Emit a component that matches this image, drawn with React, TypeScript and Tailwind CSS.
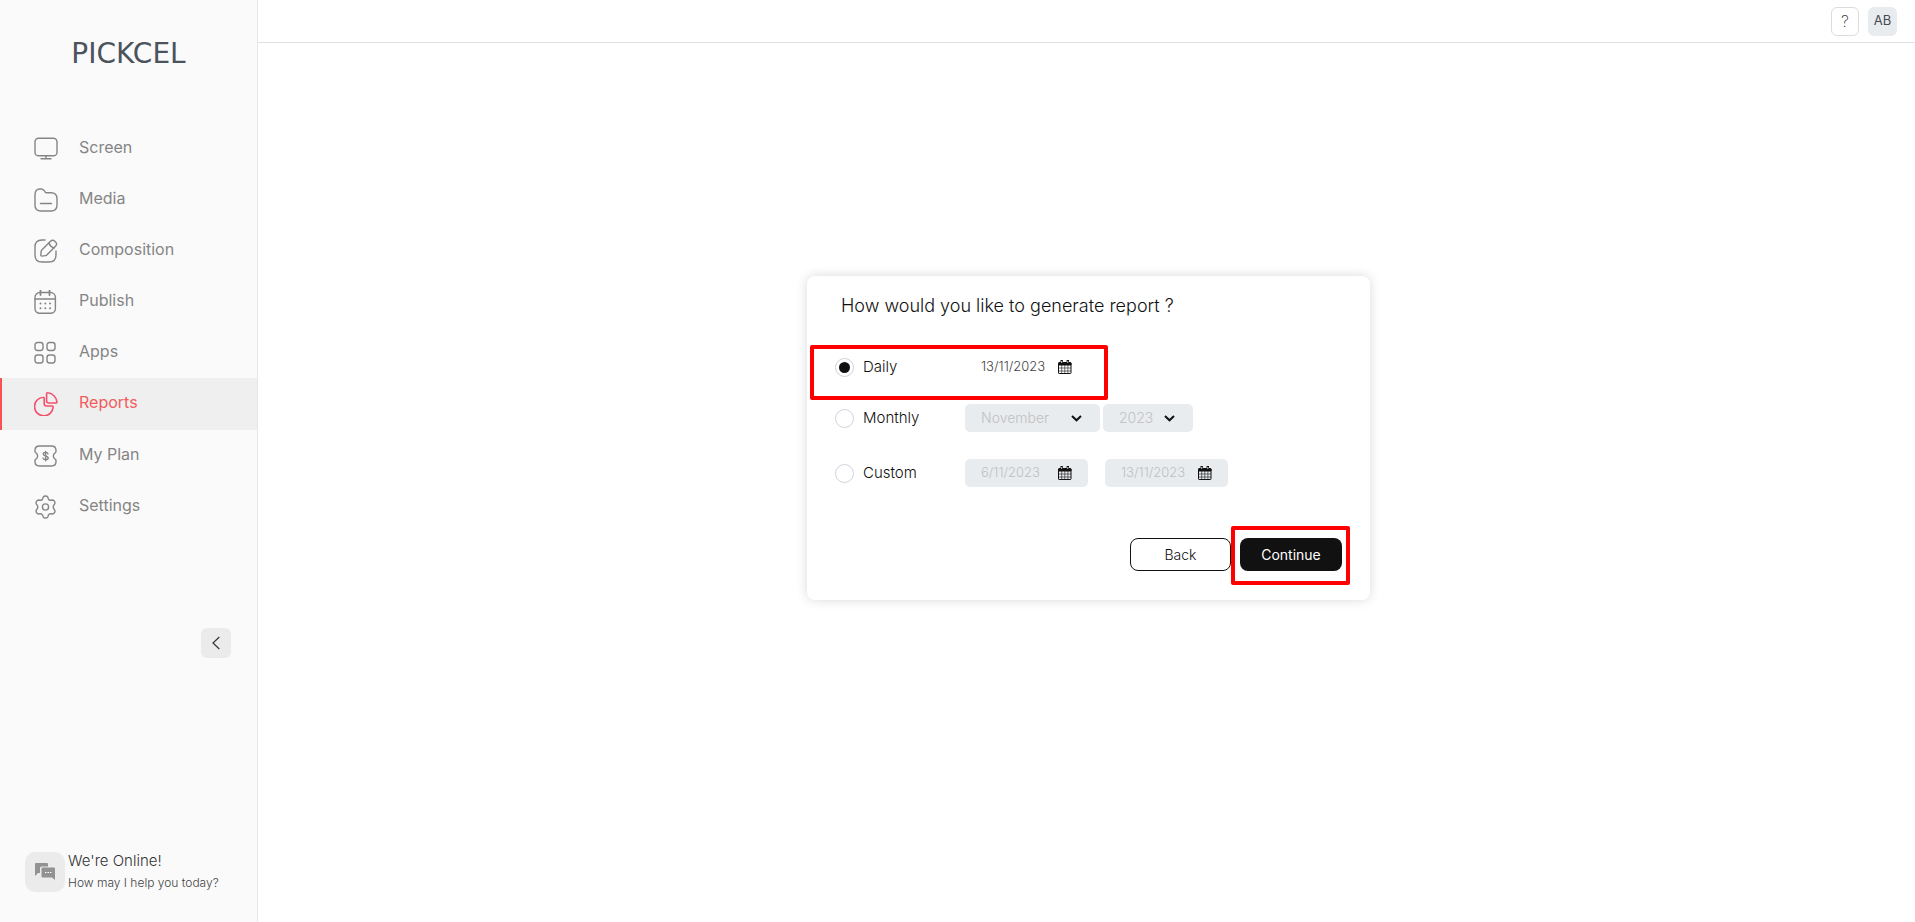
import React, { useState } from 'react'
import clsx from 'clsx'

type Mode = 'daily' | 'monthly' | 'custom'

const iconProps = {
  width: 24,
  height: 24,
  viewBox: '0 0 24 24',
  fill: 'none',
  stroke: 'currentColor',
  strokeWidth: 1.4,
  strokeLinecap: 'round' as const,
  strokeLinejoin: 'round' as const,
  'aria-hidden': true,
}

const ScreenIcon = () => (
  <svg {...iconProps}>
    <rect x="1" y="1.2" width="22" height="17.6" rx="3.6" />
    <path d="M12 18.8v2.8M7 21.8h10" />
  </svg>
)

const MediaIcon = () => (
  <svg {...iconProps}>
    <path d="M1 7C1 3 2.500 1 5.800 1h1c1.700 0 2.600.5 3.400 1.700l.8 1.200c.5.7.9.9 1.700.9H17c4 0 6 2 6 6V17c0 4-2 6-6 6H7c-4 0-6-2-6-6z" />
    <path d="M6.500 15.500h11" />
  </svg>
)

const CompositionIcon = () => (
  <svg {...iconProps}>
    <path d="M11 1H8C3 1 1 3 1 8v8c0 5 2 7 7 7h7c5 0 7-2 7-7v-4" />
    <path d="M16.500 2.300 7.800 11a2 2 0 0 0-.6 1.200L6.800 16c-.1.700.4 1.200 1.100 1.100l3.700-.5a2 2 0 0 0 1.200-.6l8.700-8.700c1.500-1.500 1.500-2.900 0-4.300l-.7-.7c-1.400-1.500-2.800-1.500-4.300 0z" />
    <path d="M15 4c.8 2.600 2.500 4.200 5 5" />
  </svg>
)

const PublishIcon = () => (
  <svg {...iconProps}>
    <path d="M6.500 .5v4.500M15.500 .5v4.500" strokeWidth="1.800" />
    <rect x="1" y="2.500" width="20.400" height="20.800" rx="4.800" />
    <path d="M1 9h20.400" />
    <path d="M6.500 13.600h.01M11.300 13.600h.01M16 13.600h.01M6.500 18.200h.01M11.300 18.200h.01M16 18.200h.01" strokeWidth="2" />
  </svg>
)

const AppsIcon = () => (
  <svg {...iconProps}>
    <rect x="1" y="1.500" width="8" height="8" rx="2.400" />
    <rect x="13" y="1.500" width="8" height="8" rx="2.400" />
    <rect x="1" y="14" width="8" height="8" rx="2.400" />
    <rect x="13" y="14" width="8" height="8" rx="2.400" />
  </svg>
)

const ReportsIcon = () => (
  <svg {...iconProps} strokeWidth={1.6}>
    <path d="M12.600 1.800c0-.7.400-1.100 1.100-1 4.900.5 8.700 4.300 9.200 9 .1.700-.4 1.200-1.100 1.200h-7.200c-1.300 0-2-.7-2-2z" />
    <path d="M9.200 5.300c.6-.1 1 .3 1 .9v5.600c0 1.500.7 2.200 2.200 2.200h5.700c.7 0 1.100.5 1 1.100A9.300 9.300 0 1 1 9.200 5.300z" />
  </svg>
)

const PlanIcon = () => (
  <svg {...iconProps}>
    <path d="M5.500 2h12c3.200 0 4.500 1.300 4.500 4.500v1c0 .6-.3 1-.9 1.300-2.300 1.300-2.300 5.100 0 6.400.6.300.9.700.9 1.300v1c0 3.200-1.300 4.500-4.500 4.500h-12C2.300 22 1 20.700 1 17.500v-1c0-.6.3-1 .9-1.300 2.300-1.300 2.300-5.100 0-6.400C1.300 8.500 1 8.100 1 7.500v-1C1 3.300 2.300 2 5.500 2z" />
    <path d="M14 9.900c-.2-1-1-1.500-2.400-1.500-1.500 0-2.400.6-2.400 1.700 0 2.500 5 1.300 5 3.900 0 1.100-1 1.700-2.500 1.700s-2.500-.6-2.700-1.600M11.600 7.400v9.400" />
  </svg>
)

const SettingsIcon = () => (
  <svg {...iconProps}>
    <circle cx="11.500" cy="12" r="3.100" />
    <path d="M9.300 1.900c.8-1.200 3.600-1.200 4.400 0l.8 2.200c.4.800 1.200 1.200 2.100 1.100l2.100-.2c1.400 0 2.700 2.300 2.100 3.600l-1.100 1.800c-.5.800-.5 2.400 0 3.200l1.100 1.800c.6 1.300-.8 3.500-2.200 3.600l-2-.2c-.9-.1-1.700.4-2.100 1.200l-.8 2.100c-.8 1.200-3.600 1.200-4.400 0L8.500 20c-.4-.8-1.200-1.300-2.100-1.200l-2 .2c-1.400 0-2.800-2.300-2.200-3.600l1.100-1.800c.5-.8.500-2.400 0-3.200L2.200 8.600C1.600 7.300 3 5 4.400 5l2 .2c.9.100 1.700-.3 2.100-1.100z" />
  </svg>
)

const ChatIcon = () => (
  <svg width="20" height="18" viewBox="0 0 20 18" aria-hidden="true">
    <path fill="#929292" d="M1 0h11a1 1 0 0 1 1 1v2.500H6.500A1.500 1.500 0 0 0 5 5v5H3l-3 3V1a1 1 0 0 1 1-1z" />
    <path fill="#929292" d="M7.500 4.500H19a1 1 0 0 1 1 1V17l-3-2.500H7.500a1 1 0 0 1-1-1v-8a1 1 0 0 1 1-1z" />
    <path stroke="#fff" strokeWidth="1" strokeDasharray="1.500 1" d="M10 9.500h7" />
  </svg>
)

const CalendarIcon = () => (
  <svg width="14" height="14" viewBox="0 0 14 14" fill="none" stroke="#111" aria-hidden="true">
    <rect x=".5" y="2.500" width="12.500" height="11" rx=".6" />
    <path d="M1 3h12v2H1z" fill="#111" />
    <path d="M.5 8h12.500M.5 11h12.500M3.700 5v8.500M6.800 5v8.500M9.900 5v8.500" strokeWidth=".6" />
    <path d="M3.700.5v3M9.800.5v3" strokeWidth="2.400" strokeLinecap="round" />
    <path d="M3.700 1v2M9.800 1v2" stroke="#fff" strokeWidth=".8" />
  </svg>
)

const ChevronIcon = () => (
  <svg
    className="pointer-events-none absolute right-[18px] top-[11px]"
    width="11"
    height="7"
    viewBox="0 0 11 7"
    fill="none"
    stroke="#111"
    strokeWidth="2"
    aria-hidden="true"
  >
    <path d="M1 1l4.500 4.300L10 1" />
  </svg>
)

const navItems = [
  { label: 'Screen', Icon: ScreenIcon },
  { label: 'Media', Icon: MediaIcon },
  { label: 'Composition', Icon: CompositionIcon },
  { label: 'Publish', Icon: PublishIcon },
  { label: 'Apps', Icon: AppsIcon },
  { label: 'Reports', Icon: ReportsIcon, active: true },
  { label: 'My Plan', Icon: PlanIcon },
  { label: 'Settings', Icon: SettingsIcon },
]

function Sidebar() {
  return (
    <aside className="flex w-[258px] shrink-0 flex-col border-r border-[#e6e6e6] bg-[#fafafa]">
      <a
        href="#home"
        className="mt-[38px] block text-center font-['DejaVu_Sans',sans-serif] text-[28px] leading-8 text-[#4b535c]"
      >
        PICKCEL
      </a>
      <nav className="mt-[53px] flex flex-col">
        {navItems.map(({ label, Icon, active }) => (
          <a
            key={label}
            href={`#${label}`}
            aria-current={active ? 'page' : undefined}
            className={clsx(
              'flex items-center gap-[21px] border-l-2 pl-8 text-base',
              active
                ? 'h-[52px] border-[#fa5252] bg-[#efefef] text-[#f4516c]'
                : 'h-[51px] border-transparent text-[#858585]'
            )}
          >
            <Icon />
            <span className={clsx('pb-1', active && 'text-[#f25c5c]')}>{label}</span>
          </a>
        ))}
      </nav>
      <button
        type="button"
        aria-label="Collapse sidebar"
        className="mr-[26px] mt-24 flex size-[30px] items-center justify-center self-end rounded-md bg-[#ebebeb]"
      >
        <svg width="8" height="14" viewBox="0 0 8 14" fill="none" stroke="#333" strokeWidth="1.2" aria-hidden="true">
          <path d="M7.300 1 1 7l6.300 6" />
        </svg>
      </button>
      <div className="mb-7 mt-auto flex items-center gap-[3px] pl-[25px]">
        <button
          type="button"
          aria-label="Open chat"
          className="flex size-10 items-center justify-center rounded-[10px] bg-[#ebebeb]"
        >
          <ChatIcon />
        </button>
        <div className="font-light">
          <p className="text-[15px] leading-[22px] text-[#333]">We're Online!</p>
          <p className="text-xs leading-[22px] text-[#444]">How may I help you today?</p>
        </div>
      </div>
    </aside>
  )
}

function DateField({ label, value, enabled }: { label: string; value: string; enabled: boolean }) {
  return (
    <div
      className={clsx(
        'flex h-7 w-[123px] items-center rounded-[5px] px-4',
        enabled ? 'bg-white' : 'bg-[#e9ecef]'
      )}
    >
      <input
        type="text"
        aria-label={label}
        defaultValue={value}
        disabled={!enabled}
        className={clsx(
          'w-full min-w-0 bg-transparent text-[13px] font-light outline-none',
          enabled ? 'text-[#444]' : 'text-[#c0c0c0]'
        )}
      />
      <button type="button" aria-label={`Open ${label} calendar`} disabled={!enabled}>
        <CalendarIcon />
      </button>
    </div>
  )
}

function SelectField({ label, options, enabled, className }: {
  label: string
  options: string[]
  enabled: boolean
  className: string
}) {
  return (
    <div className={clsx('relative h-7', className)}>
      <select
        aria-label={label}
        disabled={!enabled}
        className={clsx(
          'h-7 w-full appearance-none rounded-[5px] pl-4 text-sm font-light outline-none disabled:opacity-100',
          enabled ? 'bg-white text-[#444]' : 'bg-[#e9ecef] text-[#c0c0c0]'
        )}
      >
        {options.map((option) => (
          <option key={option}>{option}</option>
        ))}
      </select>
      <ChevronIcon />
    </div>
  )
}

function ModeRadio({ value, label, mode, onChange }: {
  value: Mode
  label: string
  mode: Mode
  onChange: (mode: Mode) => void
}) {
  return (
    <label className="flex w-[130px] shrink-0 items-center gap-[9px] text-[15px] font-light text-[#111]">
      <input
        type="radio"
        name="report-mode"
        value={value}
        checked={mode === value}
        onChange={() => onChange(value)}
        className="size-[19px] appearance-none rounded-full border border-[#ced4da] bg-white bg-clip-content p-[3px] checked:bg-[#111]"
      />
      {label}
    </label>
  )
}

function ReportCard() {
  const [mode, setMode] = useState<Mode>('daily')

  return (
    <form
      className="w-full max-w-[563px] rounded-lg bg-white px-7 pb-[29px] pt-4 shadow-[0_0_12px_rgba(0,0,0,0.15)]"
      onSubmit={(e) => e.preventDefault()}
    >
      <h1 className="pl-1.5 text-lg font-light leading-7 text-[#111]">
        How would you like to generate report ?
      </h1>

      <div className="relative mt-[33px] flex h-7 items-center">
        <ModeRadio value="daily" label="Daily" mode={mode} onChange={setMode} />
        <DateField label="Date" value="13/11/2023" enabled={mode === 'daily'} />
        <div className="pointer-events-none absolute -left-[25px] -top-2 h-[55px] w-[298px] rounded-xs border-4 border-[#ff0000]" />
      </div>

      <div className="mt-[23px] flex h-7 items-center">
        <ModeRadio value="monthly" label="Monthly" mode={mode} onChange={setMode} />
        <div className="flex gap-[3px]">
          <SelectField label="Month" options={['November', 'December']} enabled={mode === 'monthly'} className="w-[135px]" />
          <SelectField label="Year" options={['2023', '2022']} enabled={mode === 'monthly'} className="w-[90px]" />
        </div>
      </div>

      <div className="mt-[27px] flex h-7 items-center">
        <ModeRadio value="custom" label="Custom" mode={mode} onChange={setMode} />
        <div className="flex gap-[17px]">
          <DateField label="Start date" value="6/11/2023" enabled={mode === 'custom'} />
          <DateField label="End date" value="13/11/2023" enabled={mode === 'custom'} />
        </div>
      </div>

      <div className="mt-[51px] flex justify-end gap-[9px] text-sm">
        <button type="button" className="h-[33px] w-[101px] rounded-lg border border-[#111] bg-white font-light text-[#111]">
          Back
        </button>
        <div className="relative">
          <button type="submit" className="h-[33px] w-[102px] rounded-lg bg-[#111] text-white">
            Continue
          </button>
          <div className="pointer-events-none absolute -left-[9px] -top-3 h-[59px] w-[119px] rounded-xs border-4 border-[#ff0000]" />
        </div>
      </div>
    </form>
  )
}

export default function App() {
  return (
    <div className="flex min-h-screen bg-white font-['Inter',sans-serif]">
      <Sidebar />
      <div className="flex min-w-0 flex-1 flex-col">
        <header className="flex h-[43px] items-center justify-end gap-[9px] border-b border-[#dee2e6] pr-[18px]">
          <button
            type="button"
            aria-label="Help"
            className="h-[29px] w-7 rounded-md border border-[#dcdcdc] text-base font-extralight text-[#333]"
          >
            ?
          </button>
          <button type="button" className="size-[29px] rounded-md bg-[#e9ecef] text-[13px] text-[#444b52]">
            AB
          </button>
        </header>
        <main className="flex flex-1 items-start justify-center pl-7 pr-6 pt-[233px]">
          <ReportCard />
        </main>
      </div>
    </div>
  )
}
